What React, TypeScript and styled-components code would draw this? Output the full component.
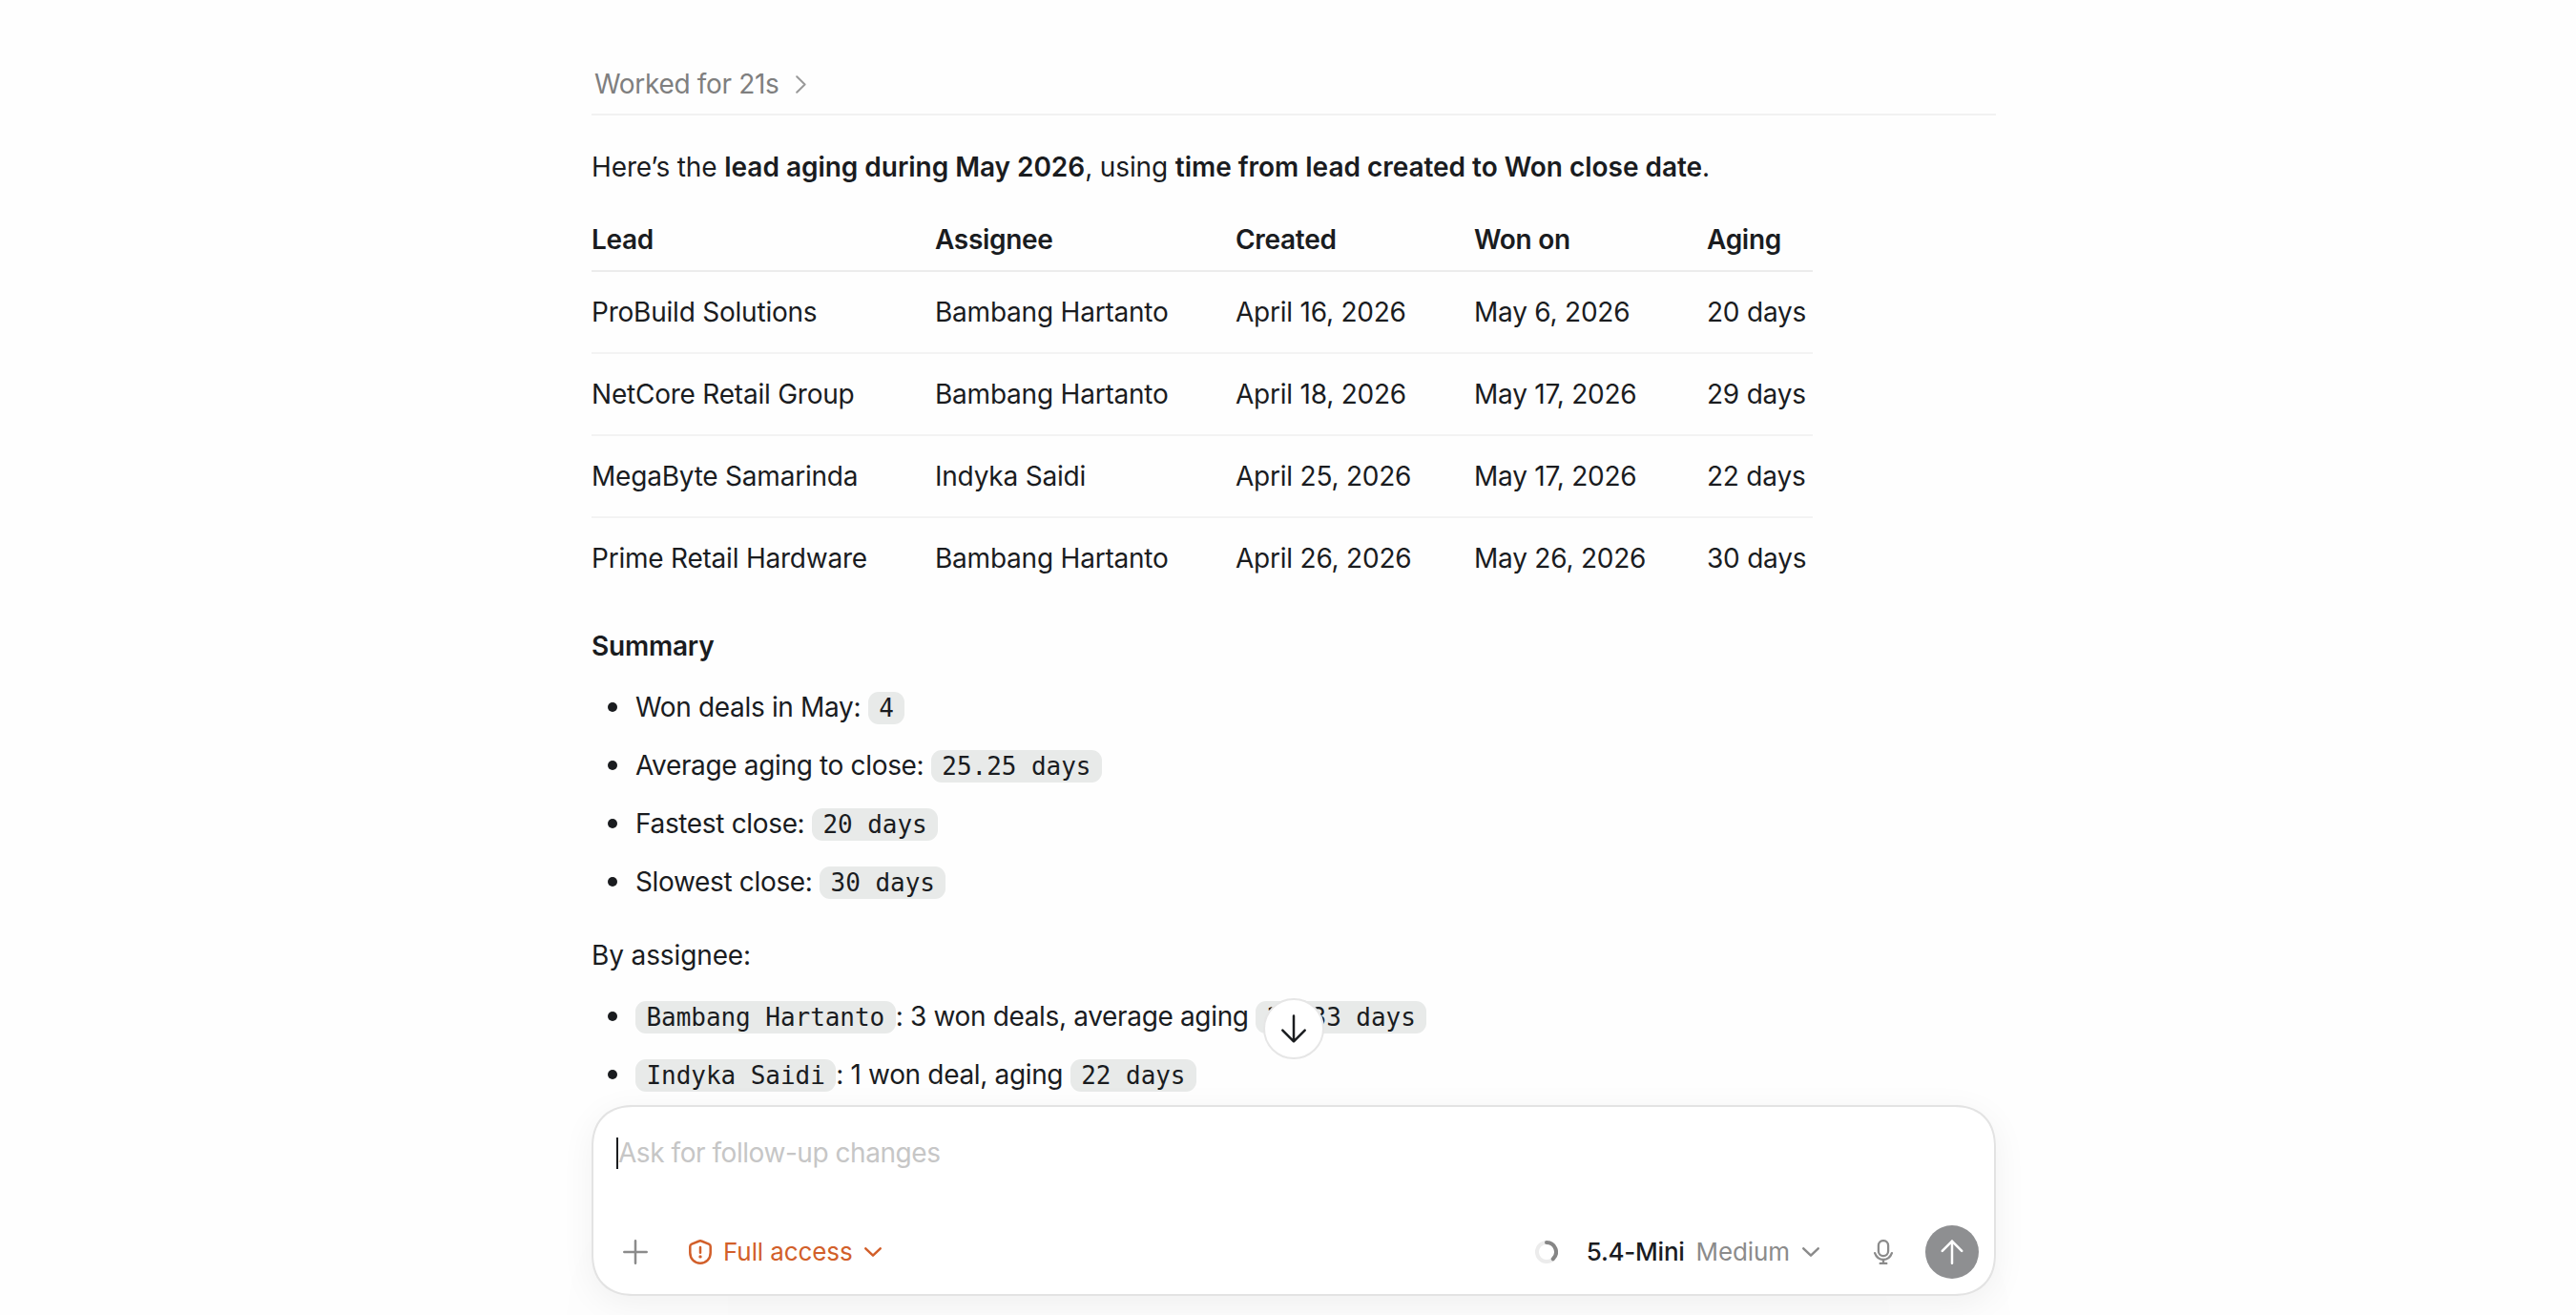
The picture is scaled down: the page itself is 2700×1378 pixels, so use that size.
import React from 'react';
import styled, { createGlobalStyle } from 'styled-components';

const GlobalStyle = createGlobalStyle`
  body {
    margin: 0;
    background: #fefefe;
    color: #1a1c1f;
    font-family: Inter, "Liberation Sans", sans-serif;
    font-size: 28px;
    line-height: 44px;
  }
`;

const Page = styled.main`
  box-sizing: border-box;
  display: flex;
  flex-direction: column;
  width: 1472px;
  height: 1378px;
  margin: 0 auto;
  padding: 64px 0 20px;
  position: relative;
  left: 6px;
`;

const Thread = styled.article`
  flex: 1;
  min-height: 0;
`;

const WorkedRow = styled.div`
  display: flex;
  align-items: center;
  gap: 17px;
  height: 48px;
  padding: 0 0 7px 3px;
  border-bottom: 2px solid #f2f2f2;
  color: #7f7f7f;
  letter-spacing: -0.32px;
`;

const Paragraph = styled.p<{ $gap: number }>`
  margin: ${({ $gap }) => $gap}px 0 0;
  letter-spacing: -0.12px;

  strong {
    font-weight: 600;
    letter-spacing: -0.03px;
  }
`;

const Table = styled.table`
  table-layout: fixed;
  width: 1280px;
  margin-top: 32px;
  border-collapse: separate;
  border-spacing: 0;
`;

const Column = styled.col<{ $width?: number }>`
  width: ${({ $width }) => ($width ? `${$width}px` : 'auto')};
`;

const HeadCell = styled.th`
  padding: 0 0 10px;
  border-bottom: 2px solid #ececec;
  font-weight: 600;
  letter-spacing: -0.3px;
  text-align: left;
`;

const Cell = styled.td`
  padding: 20px 0;
  border-bottom: 2px solid #f3f3f3;
  letter-spacing: -0.22px;
  white-space: nowrap;

  tr:last-child > & {
    border-bottom: none;
  }
`;

const SectionTitle = styled.h3`
  margin: 28px 0 0;
  font-size: 28px;
  font-weight: 600;
  letter-spacing: -0.2px;
`;

const List = styled.ul`
  display: flex;
  flex-direction: column;
  gap: 17px;
  margin: 20px 0 0;
  padding: 0;
  list-style: none;
`;

const Item = styled.li`
  display: flex;
  align-items: center;
  height: 44px;
  padding-left: 17px;
  letter-spacing: -0.34px;

  &::before {
    content: '';
    width: 10px;
    height: 10px;
    margin-right: 19px;
    border-radius: 50%;
    background: #1a1c1f;
  }
`;

const Code = styled.code`
  padding: 2px 11.5px;
  border-radius: 11px;
  background: #e8eae9;
  font-family: "DejaVu Sans Mono", monospace;
  font-size: 26px;
  line-height: 30px;
  letter-spacing: -0.05px;
`;

const Composer = styled.section`
  box-sizing: border-box;
  display: flex;
  flex-direction: column;
  justify-content: space-between;
  position: relative;
  height: 200px;
  padding: 26px 16px 16px 24px;
  border: 2px solid #e3e3e3;
  border-radius: 44px;
  corner-shape: superellipse(1.2);
  background: #fff;
  box-shadow: 0 8px 36px rgba(0, 0, 0, 0.055), 0 120px 240px rgba(0, 0, 0, 0.015);
`;

const Prompt = styled.div`
  display: flex;
  align-items: center;
  color: #c6c6c6;
  letter-spacing: -0.45px;
`;

const Caret = styled.span`
  width: 2px;
  height: 33px;
  background: #1a1c1f;
`;

const Toolbar = styled.div`
  display: flex;
  align-items: center;
  justify-content: space-between;
  font-size: 26px;
`;

const ToolGroup = styled.div`
  display: flex;
  align-items: center;
`;

const ToolButton = styled.button<{ $color?: string; $left?: number; $gap?: number }>`
  display: flex;
  align-items: center;
  gap: ${({ $gap }) => $gap || 0}px;
  margin: 0 0 0 ${({ $left }) => $left || 0}px;
  padding: 0;
  border: none;
  background: none;
  color: ${({ $color }) => $color || '#8b8b8b'};
  font: inherit;
  letter-spacing: -0.1px;
`;

const ModelName = styled.span`
  margin-right: -1px;
  color: #1a1c1f;
  font-weight: 450;
  letter-spacing: -0.25px;
`;

const SendButton = styled.button`
  display: flex;
  align-items: center;
  justify-content: center;
  width: 56px;
  height: 56px;
  margin-left: 34px;
  padding: 0;
  border: none;
  border-radius: 50%;
  background: #8e8f91;
  color: #fff;
`;

const ScrollButton = styled.button`
  box-sizing: border-box;
  display: flex;
  align-items: center;
  justify-content: center;
  position: absolute;
  top: -114px;
  left: 702px;
  width: 64px;
  height: 64px;
  padding: 0;
  border: 2px solid #e6e6e6;
  border-radius: 50%;
  background: #fff;
  color: #1a1c1f;
`;

const Icon = styled.svg<{ $weight?: number }>`
  display: block;
  flex: none;
  fill: none;
  stroke: currentColor;
  stroke-width: ${({ $weight }) => $weight || 2.5}px;
  stroke-linecap: round;
  stroke-linejoin: round;
`;

const leads = [
  ['ProBuild Solutions', 'Bambang Hartanto', 'April 16, 2026', 'May 6, 2026', '20 days'],
  ['NetCore Retail Group', 'Bambang Hartanto', 'April 18, 2026', 'May 17, 2026', '29 days'],
  ['MegaByte Samarinda', 'Indyka Saidi', 'April 25, 2026', 'May 17, 2026', '22 days'],
  ['Prime Retail Hardware', 'Bambang Hartanto', 'April 26, 2026', 'May 26, 2026', '30 days'],
];

const summary = [
  ['Won deals in May:', '4'],
  ['Average aging to close:', '25.25 days'],
  ['Fastest close:', '20 days'],
  ['Slowest close:', '30 days'],
];

const assignees = [
  ['Bambang Hartanto', ': 3 won deals, average aging', '26.33 days'],
  ['Indyka Saidi', ': 1 won deal, aging', '22 days'],
];

const ChevronDown = () => (
  <Icon width="18" height="10" viewBox="0 0 18 10">
    <path d="M1.3 1.3 9 8.6l7.7-7.3" />
  </Icon>
);

const App = () => {
  return (
    <>
      <GlobalStyle />
      <Page>
        <Thread>
          <WorkedRow>
            Worked for 21s
            <Icon width="11" height="19" viewBox="0 0 11 19" $weight={2} strokeOpacity="0.8">
              <path d="M1.2 1.2 9.6 9.5l-8.4 8.3" />
            </Icon>
          </WorkedRow>
          <Paragraph $gap={32}>
            Here’s the <strong>lead aging during May 2026</strong>, using{' '}
            <strong>time from lead created to Won close date</strong>.
          </Paragraph>
          <Table>
            <colgroup>
              <Column $width={360} />
              <Column $width={315} />
              <Column $width={250} />
              <Column $width={244} />
              <Column />
            </colgroup>
            <thead>
              <tr>
                {['Lead', 'Assignee', 'Created', 'Won on', 'Aging'].map(name => (
                  <HeadCell key={name}>{name}</HeadCell>
                ))}
              </tr>
            </thead>
            <tbody>
              {leads.map(lead => (
                <tr key={lead[0]}>
                  {lead.map(value => <Cell key={value}>{value}</Cell>)}
                </tr>
              ))}
            </tbody>
          </Table>
          <SectionTitle>Summary</SectionTitle>
          <List>
            {summary.map(([label, value]) => (
              <Item key={label}>
                <span>{label} <Code>{value}</Code></span>
              </Item>
            ))}
          </List>
          <Paragraph $gap={33}>By assignee:</Paragraph>
          <List>
            {assignees.map(([name, text, value]) => (
              <Item key={name}>
                <span><Code>{name}</Code>{text} <Code>{value}</Code></span>
              </Item>
            ))}
          </List>
        </Thread>
        <Composer>
          <ScrollButton aria-label="Scroll to bottom">
            <Icon width="28" height="32" viewBox="0 0 28 32">
              <path d="M14 2.6v26.6M2.3 17.6 14 29.3l11.7-11.7" />
            </Icon>
          </ScrollButton>
          <Prompt>
            <Caret />
            Ask for follow-up changes
          </Prompt>
          <Toolbar>
            <ToolGroup>
              <ToolButton aria-label="Add" $left={7}>
                <Icon width="26" height="26" viewBox="0 0 26 26">
                  <path d="M13 1.3v23.4M1.3 13h23.4" />
                </Icon>
              </ToolButton>
              <ToolButton $color="#d25f2a" $left={43} $gap={12}>
                <Icon width="24" height="26" viewBox="0 0 24 26">
                  <path d="M10.9 1.5q1.1-.5 2.2 0l7.8 3.1q1.8.8 1.8 2.6v6.6c0 6.3-4.6 10.9-10.7 10.9S1.3 20.1 1.3 13.8V7.2q0-1.8 1.8-2.6z" />
                  <path d="M12 7.9v5.9" />
                  <circle cx="12" cy="17.9" r="1.7" fill="currentColor" stroke="none" />
                </Icon>
                Full access
                <ChevronDown />
              </ToolButton>
            </ToolGroup>
            <ToolGroup>
              <Icon width="24" height="24" viewBox="0 0 24 24" $weight={4}>
                <circle cx="12" cy="12" r="10" stroke="#ececec" />
                <path d="M12 2a10 10 0 0 1 6.8 17.3" stroke="#868686" />
              </Icon>
              <ToolButton $left={30} $gap={13}>
                <ModelName>5.4-Mini</ModelName>
                Medium
                <ChevronDown />
              </ToolButton>
              <ToolButton aria-label="Dictate" $left={57}>
                <Icon width="20" height="26" viewBox="0 0 20 26" $weight={2.3}>
                  <rect x="4.9" y="1.1" width="10.2" height="16" rx="5.1" />
                  <path d="M1.1 14.2C2.7 18.6 6 21 10 21s7.3-2.4 8.900-6.800M10 21v3.900M6.700 24.900h6.600" />
                </Icon>
              </ToolButton>
              <SendButton aria-label="Send">
                <Icon width="24" height="26" viewBox="0 0 24 26">
                  <path d="M12 24.8V1.6M1.8 11.9 12 1.6l10.2 10.3" />
                </Icon>
              </SendButton>
            </ToolGroup>
          </Toolbar>
        </Composer>
      </Page>
    </>
  );
};

export default App;
